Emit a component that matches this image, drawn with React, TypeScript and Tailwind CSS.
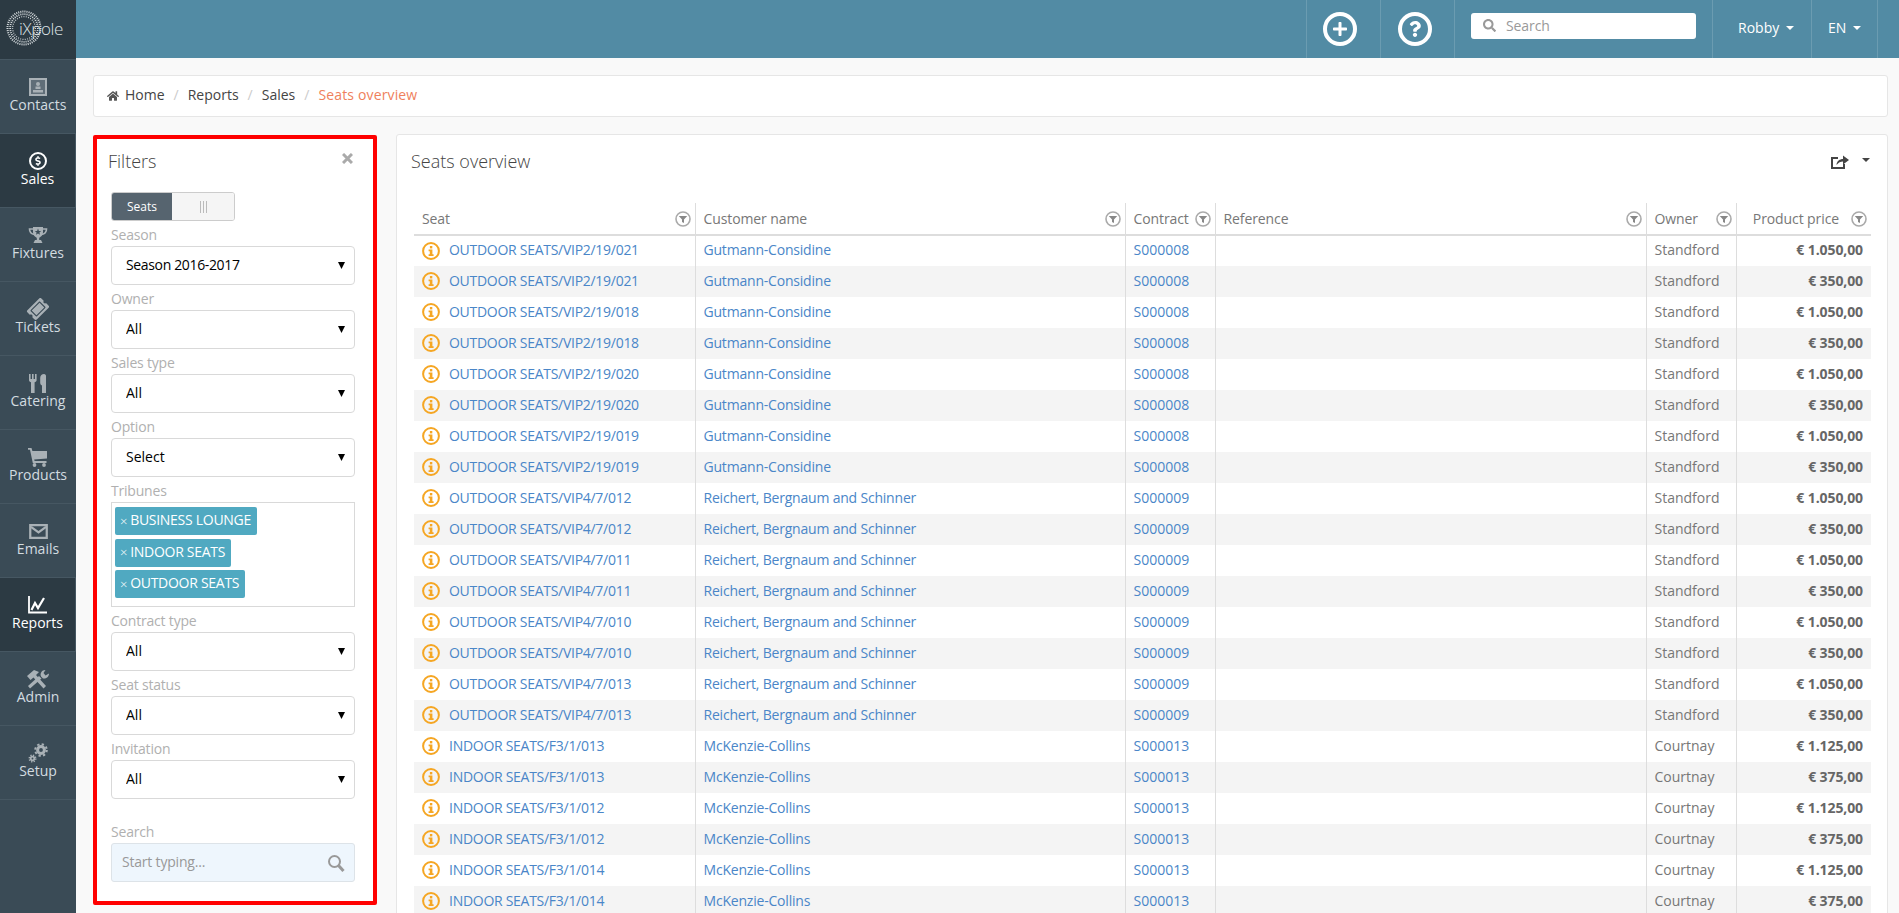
import type { ReactNode } from "react";
import { FaHome, FaSearch, FaQuestion, FaPlus, FaTicketAlt, FaDollarSign } from "react-icons/fa";

function ContactsIcon() {
  return (
    <svg viewBox="0 0 18 18" className="h-[18px] w-[18px]">
      <rect x="1" y="1" width="16" height="16" fill="currentColor" fillOpacity="0.35" stroke="currentColor" strokeWidth="2" />
      <circle cx="9" cy="6" r="2" fill="currentColor" />
      <rect x="6.5" y="8.5" width="5" height="2.5" fill="currentColor" />
      <rect x="4" y="12" width="10" height="2.5" fill="currentColor" />
    </svg>
  );
}

function SalesIcon() {
  return (
    <span className="flex h-[18px] w-[18px] items-center justify-center rounded-full border-2 border-white">
      <FaDollarSign className="h-[10px] w-[10px]" />
    </span>
  );
}

function TrophyIcon() {
  return (
    <svg viewBox="0 0 20 18" className="h-[18px] w-[20px]">
      <path d="M5 3 H1.5 C1.5 6 3 8 6.5 8.5 M15 3 H18.5 C18.5 6 17 8 13.5 8.5" fill="none" stroke="currentColor" strokeWidth="1.6" />
      <path d="M5 1 H15 V6 C15 9.5 12.5 11 11.2 11.8 V14 H13 L14.5 17 H5.5 L7 14 H8.8 V11.8 C7.5 11 5 9.5 5 6 Z" fill="currentColor" />
      <polygon points="10,2.6 10.9,4.9 13.2,5 11.4,6.5 12,8.8 10,7.5 8,8.8 8.6,6.5 6.8,5 9.1,4.9" fill="#3a4b56" />
    </svg>
  );
}

function CateringIcon() {
  return (
    <svg viewBox="0 0 20 19" className="h-[19px] w-[20px]" fill="currentColor">
      <path d="M1 0 H2.6 V5 H4 V0 H5.6 V5 H7 V0 H8.6 V6 C8.6 7.4 7.6 8 6.6 8.2 V19 H3 V8.2 C2 8 1 7.4 1 6 Z" />
      <path d="M14 19 V11.5 C12.8 11 12.2 10 12.2 8.5 V4 C12.2 1.5 14 0 16 0 C17.4 0 18 1 18 2 V19 Z" />
    </svg>
  );
}

function CartIcon() {
  return (
    <svg viewBox="0 0 20 19" className="h-[19px] w-[20px]" fill="currentColor">
      <path d="M0 0 H3.5 L4.4 3 H19 V10.5 L6.2 11.5 L6.6 13 H18.5 V15 H4.8 L2 1.8 H0 Z" />
      <circle cx="6.5" cy="17" r="1.9" />
      <circle cx="16" cy="17" r="1.9" />
    </svg>
  );
}

function EnvelopeIcon() {
  return (
    <svg viewBox="0 0 20 16" className="h-[15px] w-[19px]" fill="none" stroke="currentColor" strokeWidth="2.4">
      <rect x="1.2" y="1.2" width="17.6" height="13.6" />
      <path d="M2 3 L10 9 L18 3" />
    </svg>
  );
}

function ReportsIcon() {
  return (
    <svg viewBox="0 0 20 18" className="h-[18px] w-[20px]" fill="none" stroke="currentColor">
      <path d="M1 0 V16.5 H19" strokeWidth="1.8" />
      <path d="M3.5 14 L7 7 L10 12 L16 2" strokeWidth="2.2" />
    </svg>
  );
}

function AdminIcon() {
  return (
    <svg viewBox="0 0 24 20" className="h-[20px] w-[24px]" fill="currentColor">
      <path d="M1 7 L8 1 L13 3 L10 6 L20 17 L17.5 19.5 L7.5 8.5 L4.5 11 Z" />
      <path d="M4 19.5 L2 17 L13 7 L15.5 9.5 Z" />
      <path d="M15 7.5 C13.8 4.5 15.5 1 19.5 1 L17.5 4 L19.5 6.5 L23 4.5 C23 8 20 10 17 9.5 Z" />
    </svg>
  );
}

function SetupIcon() {
  return (
    <svg viewBox="0 0 20 20" className="h-[20px] w-[20px]" fill="none" stroke="currentColor">
      <circle cx="13" cy="7" r="3.4" strokeWidth="3" />
      <circle cx="13" cy="7" r="5.8" strokeWidth="2" strokeDasharray="2.3 2.25" />
      <circle cx="4.5" cy="15.5" r="1.8" strokeWidth="1.8" />
      <circle cx="4.5" cy="15.5" r="3.3" strokeWidth="1.4" strokeDasharray="1.3 1.3" />
    </svg>
  );
}

const navItems: { label: string; icon: ReactNode; active?: boolean }[] = [
  { label: "Contacts", icon: <ContactsIcon /> },
  { label: "Sales", icon: <SalesIcon />, active: true },
  { label: "Fixtures", icon: <TrophyIcon /> },
  { label: "Tickets", icon: <FaTicketAlt className="h-[20px] w-[20px] -rotate-45" /> },
  { label: "Catering", icon: <CateringIcon /> },
  { label: "Products", icon: <CartIcon /> },
  { label: "Emails", icon: <EnvelopeIcon /> },
  { label: "Reports", icon: <ReportsIcon />, active: true },
  { label: "Admin", icon: <AdminIcon /> },
  { label: "Setup", icon: <SetupIcon /> },
];

function Logo() {
  return (
    <div className="relative flex h-[60px] items-center border-b border-[#465762] bg-[#2c3a43]">
      <svg viewBox="0 0 36 36" className="mt-[-3px] ml-[6px] h-[36px] w-[36px]" fill="none" stroke="#d9dee1">
        <circle cx="18" cy="18" r="16.5" strokeWidth="2" strokeDasharray="1 1.1" />
        <circle cx="18" cy="18" r="13.8" strokeWidth="1.8" strokeDasharray="1 1.1" />
        <circle cx="18" cy="18" r="11.4" strokeWidth="1.2" strokeDasharray="0.9 1.4" />
      </svg>
      <span className="absolute top-[17px] left-[19px] text-[17px] leading-[24px] font-light tracking-[-0.4px] text-[#dfe4e6]">
        iXpole
      </span>
    </div>
  );
}

function Sidebar() {
  return (
    <aside className="w-[76px] shrink-0 bg-[#3a4b56]">
      <Logo />
      {navItems.map((item) => (
        <div
          key={item.label}
          className={
            item.active
              ? "flex h-[74px] flex-col items-center border-r border-b border-[#465762] bg-[#2c3a43] pt-[17px] text-white"
              : "flex h-[74px] flex-col items-center border-b border-[#465762] pt-[17px] text-[#d3dce0]"
          }
        >
          <span className={item.active ? "flex h-[20px] items-center text-white" : "flex h-[20px] items-center text-[#a9b1b6]"}>
            {item.icon}
          </span>
          <span className="text-[14px] leading-[16px]">{item.label}</span>
        </div>
      ))}
    </aside>
  );
}

function Caret({ className }: { className: string }) {
  return (
    <span
      className={`inline-block h-0 w-0 border-x-[4px] border-t-[4px] border-x-transparent ${className}`}
    />
  );
}

function TopBar() {
  return (
    <header className="flex h-[58px] shrink-0 justify-end bg-[#528ba4] pr-[21px] text-white">
      <div className="flex w-[74px] items-center justify-center border-l border-white/15 pr-[8px]">
        <span className="flex h-[34px] w-[34px] items-center justify-center rounded-full border-[4px] border-white">
          <FaPlus className="h-[16px] w-[16px]" />
        </span>
      </div>
      <div className="flex w-[74px] items-center justify-center border-l border-white/15 pr-[6px]">
        <span className="flex h-[34px] w-[34px] items-center justify-center rounded-full border-[4px] border-white">
          <FaQuestion className="h-[16px] w-[16px]" />
        </span>
      </div>
      <div className="w-[258px] border-l border-white/15 pt-[13px] pl-[16px]">
        <div className="flex h-[26px] w-[225px] items-center rounded-[3px] bg-white pb-[2px] pl-[12px]">
          <FaSearch className="h-[13px] w-[13px] text-[#999]" />
          <input
            placeholder="Search"
            className="ml-[10px] w-[170px] bg-transparent text-[14px] tracking-[-0.1px] outline-none placeholder:text-[#999]"
          />
        </div>
      </div>
      <div className="flex w-[99px] items-center gap-[7px] border-l border-white/15 pb-[3px] pl-[25px] text-[14px]">
        Robby
        <Caret className="border-t-white" />
      </div>
      <div className="flex w-[67px] items-center gap-[7px] border-x border-white/15 pb-[3px] pl-[16px] text-[14px]">
        EN
        <Caret className="border-t-white" />
      </div>
    </header>
  );
}

function Breadcrumb() {
  return (
    <nav className="flex h-[42px] shrink-0 items-center rounded-[3px] border border-[#e6e6e6] bg-white pb-[3px] pl-[13px] text-[14px] font-medium text-[#444]">
      <FaHome className="mt-[3px] mr-[6px] h-[12px] w-[12px] text-[#555]" />
      <span>Home</span>
      <span className="mx-[9px] font-normal text-[#ccc]">/</span>
      <span>Reports</span>
      <span className="mx-[9px] font-normal text-[#ccc]">/</span>
      <span>Sales</span>
      <span className="mx-[9px] font-normal text-[#ccc]">/</span>
      <span className="tracking-[0.15px] text-[#ef7f5c]">Seats overview</span>
    </nav>
  );
}

function FieldLabel({ children }: { children: ReactNode }) {
  return <label className="block h-[25px] pt-[3px] text-[14px] leading-[22px] tracking-[-0.2px] text-[#b0b0b0]">{children}</label>;
}

function Select({ label, value }: { label: string; value: string }) {
  return (
    <div>
      <FieldLabel>{label}</FieldLabel>
      <div className="relative">
        <select
          defaultValue={value}
          className={
            value.length > 6
              ? "h-[39px] w-full appearance-none rounded-[4px] border border-[#d9d9d9] bg-white pb-[2px] pl-[14px] text-[14px] tracking-[-0.35px] text-black outline-none"
              : "h-[39px] w-full appearance-none rounded-[4px] border border-[#d9d9d9] bg-white pb-[2px] pl-[14px] text-[14px] text-black outline-none"
          }
        >
          <option>{value}</option>
        </select>
        <svg viewBox="0 0 7 7" className="pointer-events-none absolute top-[16px] right-[10px] h-[7px] w-[7px]">
          <polygon points="0,0 7,0 3.5,7" fill="#000" />
        </svg>
      </div>
    </div>
  );
}

function Tag({ label }: { label: string }) {
  return (
    <div className="flex h-[28px] w-fit items-center rounded-[2px] bg-[#50a9c1] pr-[6px] pb-[3px] pl-[5px] text-[14px] tracking-[-0.28px] text-white">
      <span className="mt-[3px] mr-[3px] text-[13px] leading-none font-light">×</span>
      {label}
    </div>
  );
}

function FiltersPanel() {
  return (
    <section className="mt-px h-[770px] w-[284px] shrink-0 rounded-[2px] border-4 border-[#ff0000] bg-white pr-[18px] pl-[14px]">
      <div className="-ml-[3px] flex h-[53px] items-start justify-between pt-[10px]">
        <h2 className="text-[18px] leading-[24px] font-light text-[#444]">Filters</h2>
        <svg viewBox="0 0 11 11" className="mt-[4px] mr-[2px] h-[11px] w-[11px]" stroke="#aaa" strokeWidth="3">
          <path d="M1 1 L10 10 M10 1 L1 10" />
        </svg>
      </div>
      <div className="flex h-[29px] w-[124px] overflow-hidden rounded-[3px] border border-[#ccc] text-[12px]">
        <span className="flex w-[60px] items-center justify-center bg-[#56646f] text-white">Seats</span>
        <span className="flex flex-1 items-center justify-center gap-[2px] bg-[#f5f5f5]">
          <i className="h-[12px] w-px bg-[#bbb]" />
          <i className="h-[12px] w-px bg-[#bbb]" />
          <i className="h-[12px] w-px bg-[#bbb]" />
        </span>
      </div>
      <Select label="Season" value="Season 2016-2017" />
      <Select label="Owner" value="All" />
      <Select label="Sales type" value="All" />
      <Select label="Option" value="Select" />
      <FieldLabel>Tribunes</FieldLabel>
      <div className="flex h-[105px] flex-col gap-[3.5px] border border-[#d9d9d9] px-[3px] pt-[4px]">
        <Tag label="BUSINESS LOUNGE" />
        <Tag label="INDOOR SEATS" />
        <Tag label="OUTDOOR SEATS" />
      </div>
      <Select label="Contract type" value="All" />
      <Select label="Seat status" value="All" />
      <Select label="Invitation" value="All" />
      <label className="flex h-[44px] items-end text-[14px] leading-[22px] tracking-[-0.2px] text-[#b0b0b0]">Search</label>
      <div className="flex h-[39px] items-center justify-between rounded-[3px] border border-[#dde3e8] bg-[#eef6fd] pr-[9px] pl-[10px]">
        <input
          placeholder="Start typing..."
          className="mb-[2px] w-[170px] bg-transparent text-[14px] tracking-[-0.2px] outline-none placeholder:text-[#999]"
        />
        <svg viewBox="0 0 18 18" className="h-[18px] w-[18px]" fill="none" stroke="#999" strokeWidth="2">
          <circle cx="7.5" cy="7.5" r="5.5" />
          <path d="M11.5 11.5 L16.5 17" strokeWidth="3" />
        </svg>
      </div>
    </section>
  );
}

type Row = { seat: string; customer: string; contract: string; owner: string; price: string };

function pair(seat: string, customer: string, contract: string, owner: string, high: string, low: string): Row[] {
  return [
    { seat, customer, contract, owner, price: high },
    { seat, customer, contract, owner, price: low },
  ];
}

const gutmann = ["Gutmann-Considine", "S000008", "Standford", "€ 1.050,00", "€ 350,00"] as const;
const reichert = ["Reichert, Bergnaum and Schinner", "S000009", "Standford", "€ 1.050,00", "€ 350,00"] as const;
const mckenzie = ["McKenzie-Collins", "S000013", "Courtnay", "€ 1.125,00", "€ 375,00"] as const;

const rows: Row[] = [
  ...pair("OUTDOOR SEATS/VIP2/19/021", ...gutmann),
  ...pair("OUTDOOR SEATS/VIP2/19/018", ...gutmann),
  ...pair("OUTDOOR SEATS/VIP2/19/020", ...gutmann),
  ...pair("OUTDOOR SEATS/VIP2/19/019", ...gutmann),
  ...pair("OUTDOOR SEATS/VIP4/7/012", ...reichert),
  ...pair("OUTDOOR SEATS/VIP4/7/011", ...reichert),
  ...pair("OUTDOOR SEATS/VIP4/7/010", ...reichert),
  ...pair("OUTDOOR SEATS/VIP4/7/013", ...reichert),
  ...pair("INDOOR SEATS/F3/1/013", ...mckenzie),
  ...pair("INDOOR SEATS/F3/1/012", ...mckenzie),
  ...pair("INDOOR SEATS/F3/1/014", ...mckenzie),
];

function FilterIcon() {
  return (
    <svg viewBox="0 0 16 16" className="h-[16px] w-[16px] shrink-0">
      <circle cx="8" cy="8" r="7" fill="none" stroke="#aaa" strokeWidth="1.6" />
      <path d="M3.8 5 H12.2 L9 8.6 V12 L7 11 V8.6 Z" fill="#888" />
    </svg>
  );
}

function InfoIcon() {
  return (
    <svg viewBox="0 0 18 18" className="mt-[2px] h-[18px] w-[18px] shrink-0">
      <circle cx="9" cy="9" r="7.9" fill="none" stroke="#f5a623" strokeWidth="2" />
      <rect x="7.9" y="4" width="2.4" height="2.4" fill="#f5a623" />
      <path d="M6.6 7.4 H10.4 V12.2 H11.6 V14 H6.6 V12.2 H7.8 V9.2 H6.6 Z" fill="#f5a623" />
    </svg>
  );
}

function HeadCell({ label, filter = true, right = false }: { label: string; filter?: boolean; right?: boolean }) {
  return (
    <th className="h-[32px] border-b-2 border-l border-[#ddd] p-0 font-normal first:border-l-0">
      <div className={right ? "flex items-center justify-end gap-[12px] pr-[4px]" : "flex items-center justify-between pr-[4px] pl-[8px]"}>
        <span className="text-[14px] tracking-[-0.1px] text-[#777]">{label}</span>
        {filter && <FilterIcon />}
      </div>
    </th>
  );
}

function SeatsPanel() {
  return (
    <section className="min-w-0 flex-1 rounded-t-[3px] border border-[#e6e6e6] bg-white pr-[16px] pl-[17px]">
      <div className="-ml-[3px] flex h-[68px] items-start justify-between pt-[14px] pr-[1px]">
        <h2 className="text-[18px] leading-[24px] font-light text-[#444]">Seats overview</h2>
        <div className="flex items-start gap-[13px] text-[#444]">
          <svg viewBox="0 0 18 14" className="mt-[6px] h-[14px] w-[18px]" fill="currentColor">
            <path d="M7 3 H1 V13 H13 V9" fill="none" stroke="currentColor" strokeWidth="2" />
            <path d="M5.5 10 C5.5 6 9 4 12 4 V0.5 L18 5 L12 9.5 V6.5 C9.5 6.5 7.5 7.5 5.5 10 Z" />
          </svg>
          <Caret className="mt-[9px] border-t-[#444]" />
        </div>
      </div>
      <table className="w-[1457px] table-fixed border-collapse text-[14px]">
        <colgroup>
          <col className="w-[281px]" />
          <col className="w-[430px]" />
          <col className="w-[90px]" />
          <col className="w-[431px]" />
          <col className="w-[90px]" />
          <col className="w-[135px]" />
        </colgroup>
        <thead>
          <tr>
            <HeadCell label="Seat" />
            <HeadCell label="Customer name" />
            <HeadCell label="Contract" />
            <HeadCell label="Reference" />
            <HeadCell label="Owner" />
            <HeadCell label="Product price" right />
          </tr>
        </thead>
        <tbody>
          {rows.map((row, i) => (
            <tr key={i} className="h-[31px] even:bg-[#f4f4f4]">
              <td className="p-0 pb-[3px] pl-[8px]">
                <div className="flex items-center gap-[9px] tracking-[-0.28px] text-[#4a86c8]">
                  <InfoIcon />
                  {row.seat}
                </div>
              </td>
              <td className="border-l border-[#ddd] pb-[3px] pl-[8px] tracking-[-0.2px] text-[#4a86c8]">{row.customer}</td>
              <td className="border-l border-[#ddd] pb-[3px] pl-[8px] text-[#4a86c8]">{row.contract}</td>
              <td className="border-l border-[#ddd]" />
              <td className="border-l border-[#ddd] pb-[3px] pl-[8px] text-[#777]">{row.owner}</td>
              <td className="border-l border-[#ddd] pr-[8px] pb-[3px] text-right font-bold tracking-[-0.1px] text-[#666]">{row.price}</td>
            </tr>
          ))}
        </tbody>
      </table>
    </section>
  );
}

export default function App() {
  return (
    <div className="flex h-screen overflow-hidden bg-[#f9f9f9] font-['Open_Sans',sans-serif]">
      <Sidebar />
      <div className="flex min-w-0 flex-1 flex-col">
        <TopBar />
        <main className="flex flex-1 flex-col gap-[17px] pt-[17px] pr-[11px] pl-[17px]">
          <Breadcrumb />
          <div className="flex flex-1 items-start gap-[19px]">
            <FiltersPanel />
            <SeatsPanel />
          </div>
        </main>
      </div>
    </div>
  );
}
